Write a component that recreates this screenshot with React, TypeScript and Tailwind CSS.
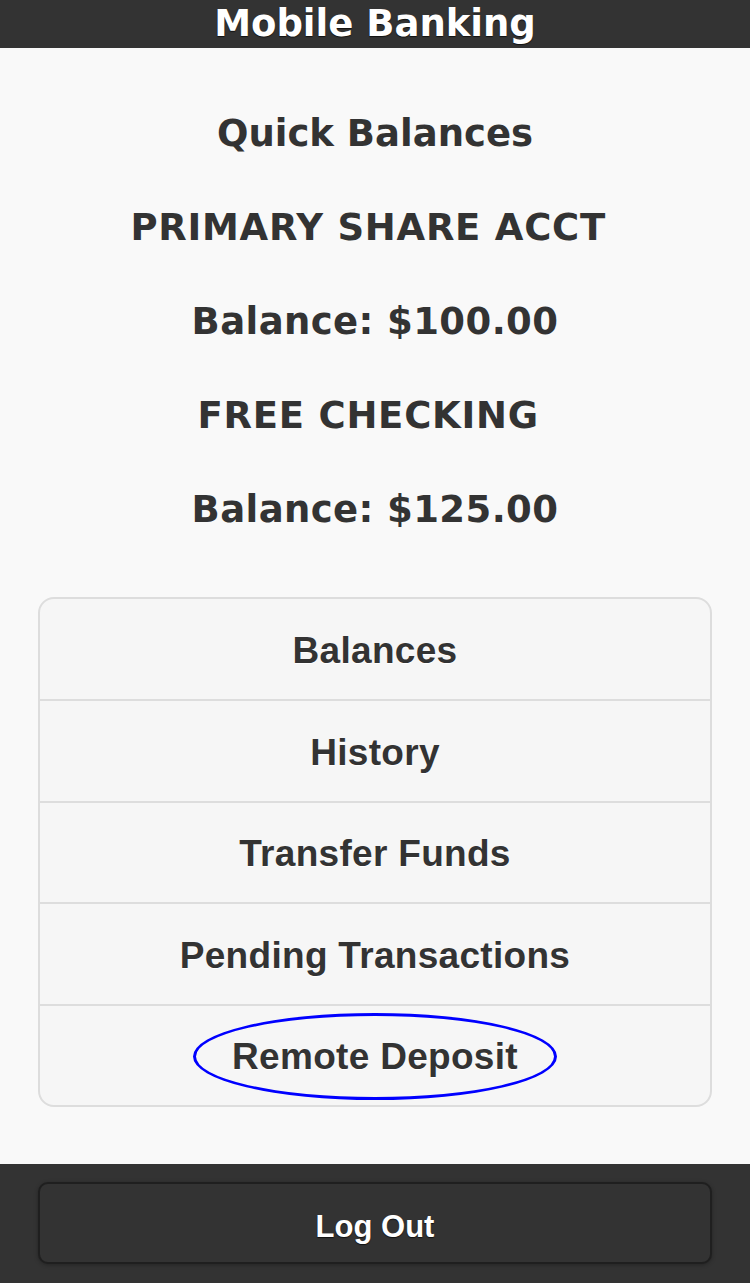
import React from "react";

const headFont = { fontFamily: '"DejaVu Sans", Verdana, sans-serif' };
const menuFont = { fontFamily: '"Liberation Sans", Arial, Helvetica, sans-serif' };

const lines: { t: string; cls: string }[] = [
  { t: "Quick Balances", cls: "" },
  { t: "PRIMARY SHARE ACCT\u00a0", cls: "tracking-[0.75px]" },
  { t: "Balance: $100.00", cls: "tracking-[0.4px]" },
  { t: "FREE CHECKING\u00a0", cls: "tracking-[0.75px]" },
  { t: "Balance: $125.00", cls: "tracking-[0.4px]" },
];

const items = ["Balances", "History", "Transfer Funds", "Pending Transactions", "Remote Deposit"];

export default function App() {
  return (
    <div className="w-[750px] h-[1283px] bg-[#f9f9f9] flex flex-col overflow-hidden">
      <header className="h-[48px] bg-[#333333] flex items-center justify-center shrink-0">
        <h1
          className="text-white font-bold text-[37px] leading-[48px] [text-shadow:0_1px_1px_#111]"
          style={headFont}
        >
          Mobile Banking
        </h1>
      </header>

      <main className="flex-1 flex flex-col">
        <div className="pt-[39px] flex flex-col">
          {lines.map((l) => (
            <div
              key={l.t}
              className={
                "h-[94px] flex items-center justify-center text-[#333333] font-bold text-[37px] leading-[44px] " +
                l.cls
              }
              style={headFont}
            >
              {l.t}
            </div>
          ))}
        </div>

        <div className="mt-[40px] mx-[38px] border-2 border-[#dddddd] rounded-[16px] bg-[#f6f6f6] overflow-hidden">
          {items.map((t, i) => (
            <div
              key={t}
              className={
                "relative flex items-center justify-center pt-[3px] text-[#333333] font-bold text-[37px] tracking-[0.3px] [text-shadow:0_1px_0_#fff] " +
                (i > 0 ? "h-[101.5px] border-t-2 border-[#dddddd]" : "h-[100px]")
              }
              style={menuFont}
            >
              {t}
              {t === "Remote Deposit" && (
                <div className="absolute left-1/2 -translate-x-1/2 top-[7px] w-[364px] h-[87px] rounded-[50%] border-[3.5px] border-[#0000ff] pointer-events-none" />
              )}
            </div>
          ))}
        </div>
      </main>

      <footer className="h-[119px] bg-[#333333] shrink-0 px-[38px] pt-[18px]">
        <button
          className="w-full h-[82px] pt-[8px] rounded-[10px] border-2 border-[#1f1f1f] bg-[#333333] text-white font-bold text-[31px] flex items-center justify-center [text-shadow:0_1px_1px_#111] shadow-[0_1px_4px_rgba(0,0,0,0.3)]"
          style={menuFont}
        >
          Log Out
        </button>
      </footer>
    </div>
  );
}
